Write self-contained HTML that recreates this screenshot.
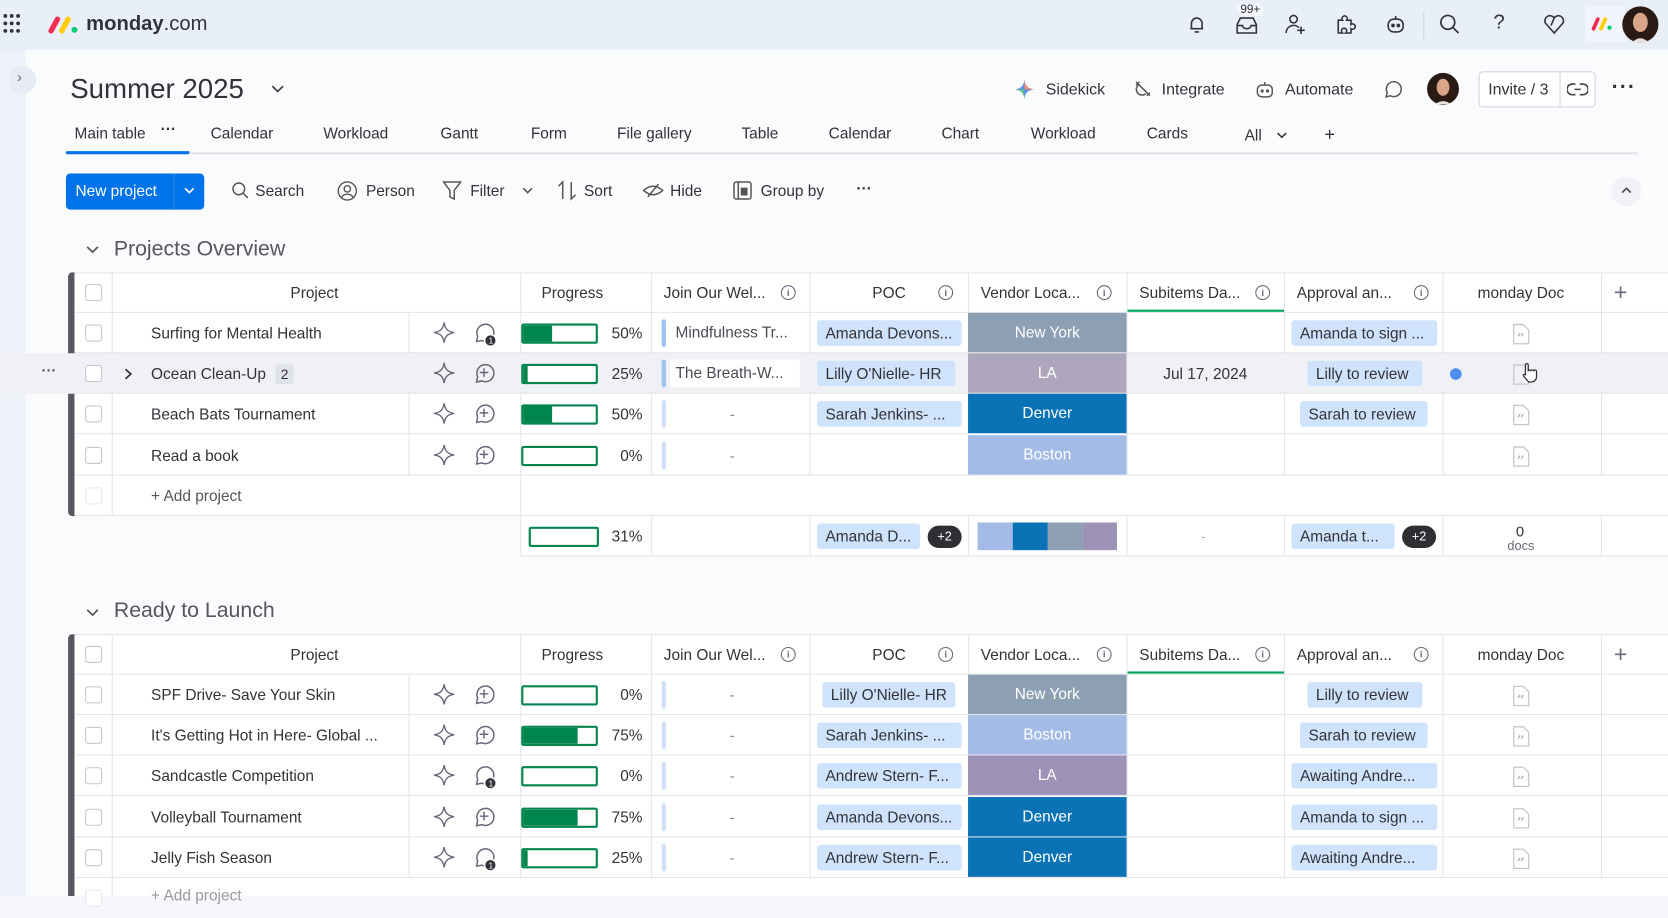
<!DOCTYPE html>
<html><head><meta charset="utf-8">
<style>
*{box-sizing:border-box;margin:0;padding:0}
html,body{width:1668px;height:896px;overflow:hidden;background:#f6f7fb;font-family:"Liberation Sans",sans-serif;color:#323338}
#w{position:absolute;left:0;top:0;width:1568px;height:842px;transform:scale(1.06378,1.06413);transform-origin:0 0;background:#fafbfc}
.a{position:absolute}
.top{left:0;top:0;width:1568px;height:47px;background:#e9eff9}
.side{left:0;top:47px;width:24px;height:795px;background:#edf1f8}
.t{position:absolute;white-space:nowrap}
.tab{top:118px;font-size:14.5px;color:#323338}
.tb{top:172px;font-size:14.5px;color:#323338}
.row{position:absolute;left:0;width:1568px;height:38px}
.row .ln{position:absolute;left:70px;right:0;bottom:0;height:1px;background:#e3e5ea}
.cb{position:absolute;left:80px;top:11px;width:16px;height:16px;border:1px solid #c5c7d0;border-radius:3px;background:#fff}
.nm{position:absolute;left:142px;top:12px;font-size:14.5px;white-space:nowrap}
.ic1{position:absolute;left:407px;top:8px}
.ic2{position:absolute;left:443px;top:7px}
.pb{position:absolute;left:490px;top:10px;width:72px;height:19px;border:2px solid #00854d;border-radius:2px;background:#fff;overflow:hidden}
.pb i{position:absolute;left:0;top:0;bottom:0;background:#00854d}
.pc{position:absolute;left:560px;width:44px;top:12px;text-align:right;font-size:14.5px}
.jb{position:absolute;left:622px;top:6px;width:4px;height:26px;border-radius:2px;background:#cfe0f7}
.jt{position:absolute;left:630px;top:6px;width:122px;height:26px;background:#fff;font-size:14.5px;padding:5px 0 0 5px;color:#4a4b55;white-space:nowrap}
.dash{position:absolute;left:686px;top:11px;font-size:14px;color:#888}
.pill{position:absolute;top:7px;height:24px;background:#cfe3fc;border-radius:3px;font-size:14.5px;padding:5px 0 0 8px;white-space:nowrap;color:#323338}
.vd{position:absolute;left:910px;top:0;width:149px;height:37px;color:#fff;font-size:14.5px;text-align:center;padding-top:11px}
.dt{position:absolute;left:1059px;width:148px;top:12px;text-align:center;font-size:14.5px}
.doc{position:absolute;left:1422px;top:10px}
.vl{position:absolute;width:1px;background:#e3e5ea}
.hd{position:absolute;font-size:14.5px;top:12px;white-space:nowrap}
.inf{position:absolute;top:12px;width:14px;height:14px;border:1.3px solid #676879;border-radius:50%;font-size:9px;text-align:center;line-height:12px;color:#676879;font-weight:bold}
.grp{font-size:20px;color:#555662}
</style></head><body>
<div id="w">
<div class="a top"></div>
<div class="a side"></div>
<div class="a" style="left:3px;top:13px;width:16px;height:18px">
<svg width="16" height="18"><g fill="#323338"><circle cx="2" cy="2" r="1.8"/><circle cx="8" cy="2" r="1.8"/><circle cx="14" cy="2" r="1.8"/><circle cx="2" cy="9" r="1.8"/><circle cx="8" cy="9" r="1.8"/><circle cx="14" cy="9" r="1.8"/><circle cx="2" cy="16" r="1.8"/><circle cx="8" cy="16" r="1.8"/><circle cx="14" cy="16" r="1.8"/></g></svg></div>
<svg class="a" style="left:45px;top:14px" width="30" height="18"><path d="M3 15 L9 4" stroke="#f62b54" stroke-width="5" stroke-linecap="round"/><path d="M13 15 L19 4" stroke="#ffcc00" stroke-width="5" stroke-linecap="round"/><circle cx="25" cy="14" r="2.8" fill="#00ca72"/></svg>
<div class="t" style="left:81px;top:12px;font-size:19px;color:#323338"><b>monday</b>.com</div>
<svg class="a" style="left:1115px;top:13px" width="20" height="20" fill="none" stroke="#323338" stroke-width="1.5"><path d="M5 14 V9 a5 5 0 0 1 10 0 V14 H4 H16 M8 17 h4"/></svg>
<svg class="a" style="left:1161px;top:14px" width="22" height="20" fill="none" stroke="#323338" stroke-width="1.5"><path d="M2 9 L5 3 H17 L20 9 V17 H2 Z M2 10 H7 a4 3 0 0 0 8 0 H20"/></svg>
<div class="t" style="left:1163px;top:3px;font-size:11px;background:#f4f6fb;border-radius:6px;padding:0 3px">99+</div>
<svg class="a" style="left:1207px;top:12px" width="22" height="22" fill="none" stroke="#323338" stroke-width="1.5"><circle cx="9" cy="6" r="3.5"/><path d="M2 19 a7 7 0 0 1 12-5 M16 13 v7 M12.5 16.5 h7"/></svg>
<svg class="a" style="left:1254px;top:12px" width="22" height="22" fill="none" stroke="#323338" stroke-width="1.5"><path d="M4 7 H8 a2.5 2.5 0 1 1 4 0 H16 V11 a2.5 2.5 0 1 1 0 4 V19 H11 a2.5 2.5 0 1 0-3 0 H4 Z"/></svg>
<svg class="a" style="left:1301px;top:12px" width="22" height="22" fill="none" stroke="#323338" stroke-width="1.5"><rect x="4" y="6" width="14" height="12" rx="5"/><path d="M11 3 v3"/><circle cx="8.5" cy="12" r="1" fill="#323338"/><circle cx="13.5" cy="12" r="1" fill="#323338"/></svg>
<div class="a" style="left:1338px;top:12px;width:1px;height:24px;background:#cdd3df"></div>
<svg class="a" style="left:1352px;top:12px" width="22" height="22" fill="none" stroke="#323338" stroke-width="1.6"><circle cx="9" cy="9" r="6.5"/><path d="M14 14 L19 19"/></svg>
<div class="t" style="left:1404px;top:11px;font-size:19px;color:#323338">?</div>
<svg class="a" style="left:1450px;top:12px" width="22" height="22" fill="none" stroke="#323338" stroke-width="1.5"><path d="M11 19 L3 10 a4.5 4.5 0 0 1 8-5 a4.5 4.5 0 0 1 8 5 Z M11 5 L8 12"/></svg>
<div class="a" style="left:1490px;top:6px;width:38px;height:34px;background:#f1f4fa"></div>
<svg class="a" style="left:1495px;top:14px" width="24" height="16"><path d="M3 13 L7 4" stroke="#f62b54" stroke-width="3.5" stroke-linecap="round"/><path d="M10 13 L14 4" stroke="#ffcc00" stroke-width="3.5" stroke-linecap="round"/><circle cx="18" cy="12" r="2" fill="#00ca72"/></svg>
<svg class="a" style="left:1524px;top:4px" width="36" height="38"><circle cx="18" cy="19" r="17" fill="#2a1a14"/><ellipse cx="18" cy="17" rx="7" ry="9" fill="#d9a68a"/><path d="M10 36 Q18 28 26 36" fill="#e8e0dc"/></svg>

<div class="a" style="left:8px;top:62px;width:26px;height:26px;border-radius:50%;background:#e6ebf4"></div>
<div class="t" style="left:16px;top:64px;font-size:14px;color:#676879">›</div>
<div class="t" style="left:66px;top:68px;font-size:26px;color:#323338">Summer 2025</div>
<svg class="a" style="left:254px;top:79px" width="14" height="10" fill="none" stroke="#323338" stroke-width="1.5"><path d="M2 2 L7 7 L12 2"/></svg>
<svg class="a" style="left:953px;top:74px" width="20" height="20"><path d="M10 1 C10.8 7 13 9.2 19 10 C13 10.8 10.8 13 10 19 C9.2 13 7 10.8 1 10 C7 9.2 9.2 7 10 1Z" fill="#5b8def"/><path d="M10 1 C10.8 7 13 9.2 19 10 L10 10Z" fill="#f98b6a"/><path d="M10 19 C9.2 13 7 10.8 1 10 L10 10Z" fill="#5cc48a"/></svg>
<div class="t" style="left:983px;top:76px;font-size:15px">Sidekick</div>
<svg class="a" style="left:1064px;top:74px" width="20" height="20" fill="none" stroke="#555" stroke-width="1.4"><path d="M4 3 L17 16 M6 6 a5 5 0 0 0 7 8 M7 3 L4 6 M14 16 L17 13"/></svg>
<div class="t" style="left:1092px;top:76px;font-size:15px">Integrate</div>
<svg class="a" style="left:1179px;top:75px" width="20" height="20" fill="none" stroke="#555" stroke-width="1.4"><rect x="3" y="5" width="14" height="11" rx="4"/><path d="M10 2 v3"/><circle cx="7.5" cy="10.5" r="0.8" fill="#555"/><circle cx="12.5" cy="10.5" r="0.8" fill="#555"/></svg>
<div class="t" style="left:1208px;top:76px;font-size:15px">Automate</div>
<svg class="a" style="left:1298px;top:73px" width="22" height="22" fill="none" stroke="#555" stroke-width="1.4"><path d="M5 18 L6 14 a7 7 0 1 1 3 3 Z"/></svg>
<svg class="a" style="left:1341px;top:68px" width="31" height="31"><circle cx="15.5" cy="15.5" r="15" fill="#2a1a14"/><ellipse cx="15.5" cy="14" rx="6" ry="8" fill="#d9a68a"/><path d="M8 30 Q15.5 24 23 30" fill="#e8e0dc"/></svg>
<div class="a" style="left:1390px;top:67px;width:110px;height:34px;border:1px solid #d0d4e4;border-radius:4px;background:#fff"></div>
<div class="a" style="left:1466px;top:67px;width:1px;height:34px;background:#d0d4e4"></div>
<div class="t" style="left:1399px;top:76px;font-size:15px">Invite / 3</div>
<svg class="a" style="left:1473px;top:75px" width="20" height="18" fill="none" stroke="#444" stroke-width="1.5"><path d="M8 4 H5 a5 5 0 0 0 0 10 H8 M12 4 H15 a5 5 0 0 1 0 10 H12 M7 9 H13"/></svg>
<div class="t" style="left:1515px;top:71px;font-size:20px;font-weight:bold;letter-spacing:1px">···</div>

<div class="t tab" style="left:70px">Main table</div>
<div class="t tab" style="left:151px;top:114px;font-weight:bold">···</div>
<div class="t tab" style="left:198px">Calendar</div>
<div class="t tab" style="left:304px">Workload</div>
<div class="t tab" style="left:414px">Gantt</div>
<div class="t tab" style="left:499px">Form</div>
<div class="t tab" style="left:580px">File gallery</div>
<div class="t tab" style="left:697px">Table</div>
<div class="t tab" style="left:779px">Calendar</div>
<div class="t tab" style="left:885px">Chart</div>
<div class="t tab" style="left:969px">Workload</div>
<div class="t tab" style="left:1078px">Cards</div>
<div class="t tab" style="left:1170px;top:120px">All</div>
<svg class="a" style="left:1199px;top:123px" width="12" height="10" fill="none" stroke="#323338" stroke-width="1.5"><path d="M2 2 L6 6 L10 2"/></svg>
<div class="t tab" style="left:1245px;top:117px;font-size:17px">+</div>
<div class="a" style="left:62px;top:143px;width:1478px;height:2px;background:#e3e5ea"></div>
<div class="a" style="left:62px;top:142px;width:116px;height:3px;background:#0073ea;border-radius:1px"></div>

<div class="a" style="left:62px;top:163px;width:130px;height:34px;background:#0073ea;border-radius:4px"></div>
<div class="t tb" style="left:71px;color:#fff">New project</div>
<div class="a" style="left:163px;top:163px;width:1px;height:34px;background:#2e8af0"></div>
<svg class="a" style="left:172px;top:175px" width="12" height="10" fill="none" stroke="#fff" stroke-width="1.6"><path d="M2 2 L6 6 L10 2"/></svg>
<svg class="a" style="left:217px;top:170px" width="18" height="18" fill="none" stroke="#555" stroke-width="1.4"><circle cx="7.5" cy="7.5" r="5.5"/><path d="M11.5 11.5 L16 16"/></svg>
<div class="t tb" style="left:240px">Search</div>
<svg class="a" style="left:317px;top:170px" width="19" height="19" fill="none" stroke="#555" stroke-width="1.3"><circle cx="9.5" cy="9.5" r="8.5"/><circle cx="9.5" cy="7.5" r="3"/><path d="M4 15.5 a6 5 0 0 1 11 0"/></svg>
<div class="t tb" style="left:344px">Person</div>
<svg class="a" style="left:416px;top:170px" width="18" height="19" fill="none" stroke="#555" stroke-width="1.4"><path d="M1 1 H17 L11 9 V17 L7 15 V9 Z"/></svg>
<div class="t tb" style="left:442px">Filter</div>
<svg class="a" style="left:490px;top:175px" width="12" height="10" fill="none" stroke="#555" stroke-width="1.5"><path d="M2 2 L6 6 L10 2"/></svg>
<svg class="a" style="left:524px;top:169px" width="18" height="20" fill="none" stroke="#555" stroke-width="1.4"><path d="M5 18 V2 L1 6 M13 2 V18 L17 14"/></svg>
<div class="t tb" style="left:549px">Sort</div>
<svg class="a" style="left:604px;top:170px" width="20" height="18" fill="none" stroke="#555" stroke-width="1.4"><path d="M1 9 Q10 1 19 9 Q10 17 1 9 Z M5 15 L15 3"/></svg>
<div class="t tb" style="left:630px">Hide</div>
<svg class="a" style="left:689px;top:170px" width="18" height="18" fill="none" stroke="#555" stroke-width="1.4"><rect x="1" y="1" width="16" height="16" rx="2"/><path d="M5 1 V17"/><rect x="8" y="7" width="5" height="6" fill="#555"/></svg>
<div class="t tb" style="left:715px">Group by</div>
<div class="t tb" style="left:805px;top:170px;font-weight:bold">···</div>
<div class="a" style="left:1515px;top:166px;width:28px;height:28px;border-radius:50%;background:#f0f2f6"></div>
<svg class="a" style="left:1523px;top:175px" width="12" height="8" fill="none" stroke="#444" stroke-width="1.5"><path d="M2 6 L6 2 L10 6"/></svg>

<svg class="a" style="left:80px;top:230px" width="14" height="10" fill="none" stroke="#555" stroke-width="1.6"><path d="M2 2 L7 7 L12 2"/></svg>
<div class="t grp" style="left:107px;top:223px">Projects Overview</div>
<div class="a" style="left:64px;top:256px;width:1504px;height:229px;background:#fff;border-top:1px solid #e3e5ea"></div>
<div class="a" style="left:489px;top:485px;width:1079px;height:38px;background:#fff;border-bottom:1px solid #e3e5ea"></div>
<div class="a" style="left:64px;top:256px;width:6px;height:229px;background:#57585f;border-radius:4px 0 0 4px"></div>
<div class="row" style="top:256px"><div class="ln"></div>
<div class="cb"></div>
<div class="hd" style="left:273px">Project</div>
<div class="hd" style="left:509px">Progress</div>
<div class="hd" style="left:624px">Join Our Wel...</div><div class="inf" style="left:734px">i</div>
<div class="hd" style="left:820px">POC</div><div class="inf" style="left:882px">i</div>
<div class="hd" style="left:922px">Vendor Loca...</div><div class="inf" style="left:1031px">i</div>
<div class="hd" style="left:1071px">Subitems Da...</div><div class="inf" style="left:1180px">i</div>
<div class="a" style="left:1059px;top:35px;width:148px;height:2px;background:#00a359"></div>
<div class="hd" style="left:1219px">Approval an...</div><div class="inf" style="left:1329px">i</div>
<div class="hd" style="left:1389px">monday Doc</div>
<div class="t" style="left:1517px;top:6px;font-size:22px;color:#676879;font-weight:300">+</div>
</div>
<div class="vl" style="left:105px;top:256px;height:229px"></div>
<div class="vl" style="left:384px;top:294px;height:153px"></div>
<div class="vl" style="left:489px;top:256px;height:267px"></div>
<div class="vl" style="left:612px;top:256px;height:191px"></div>
<div class="vl" style="left:612px;top:485px;height:38px"></div>
<div class="vl" style="left:761px;top:256px;height:191px"></div>
<div class="vl" style="left:761px;top:485px;height:38px"></div>
<div class="vl" style="left:910px;top:256px;height:191px"></div>
<div class="vl" style="left:910px;top:485px;height:38px"></div>
<div class="vl" style="left:1059px;top:256px;height:191px"></div>
<div class="vl" style="left:1059px;top:485px;height:38px"></div>
<div class="vl" style="left:1207px;top:256px;height:191px"></div>
<div class="vl" style="left:1207px;top:485px;height:38px"></div>
<div class="vl" style="left:1356px;top:256px;height:191px"></div>
<div class="vl" style="left:1356px;top:485px;height:38px"></div>
<div class="vl" style="left:1505px;top:256px;height:191px"></div>
<div class="vl" style="left:1505px;top:485px;height:38px"></div>

<div class="row" style="top:294px"><div class="ln"></div><div class="cb"></div>
<div class="nm">Surfing for Mental Health</div>
<svg class="ic1" width="21" height="21" fill="none" stroke="#676879" stroke-width="1.3"><path d="M10.5 1 C11.3 7 14 9.7 20 10.5 C14 11.3 11.3 14 10.5 20 C9.7 14 7 11.3 1 10.5 C7 9.7 9.7 7 10.5 1Z"/></svg>
<svg class="ic2" width="26" height="26" fill="none" stroke="#676879" stroke-width="1.4"><path d="M5 20 L6 15 a8 8 0 1 1 4 4 Z"/><circle cx="18" cy="19" r="5.5" fill="#323338" stroke="#fff"/><text x="16.2" y="22" font-size="8" fill="#fff" stroke="none" font-family="Liberation Sans">1</text></svg>
<div class="pb"><i style="width:27px"></i></div><div class="pc">50%</div>
<div class="jb" style="background:#9ec3f0"></div><div class="jt">Mindfulness Tr...</div>
<div class="pill" style="left:768px;width:136px">Amanda Devons...</div>
<div class="vd" style="background:#8da0b3">New York</div>
<div class="pill" style="left:1214px;width:137px">Amanda to sign ...</div>
<svg class="doc" width="16" height="20" fill="none" stroke="#c5c7d0" stroke-width="1.2"><path d="M1 1 H10 L15 6 V19 H1 Z"/><path d="M5 12 L7 9 M8 12 L10 9" stroke="#aaa"/></svg>
</div>
<div class="row" style="top:332px;background:#f0f1f5"><div class="ln"></div><div class="cb"></div>
<div class="t" style="left:39px;top:8px;font-size:14px;font-weight:bold;color:#555">···</div>
<svg class="a" style="left:116px;top:13px" width="10" height="13" fill="none" stroke="#323338" stroke-width="1.6"><path d="M2 2 L7 6.5 L2 11"/></svg>
<div class="nm">Ocean Clean-Up</div>
<div class="a" style="left:259px;top:10px;width:17px;height:19px;background:#e1e3ea;border-radius:3px;font-size:13px;text-align:center;padding-top:2px">2</div>
<svg class="ic1" width="21" height="21" fill="none" stroke="#676879" stroke-width="1.3"><path d="M10.5 1 C11.3 7 14 9.7 20 10.5 C14 11.3 11.3 14 10.5 20 C9.7 14 7 11.3 1 10.5 C7 9.7 9.7 7 10.5 1Z"/></svg>
<svg class="ic2" width="26" height="26" fill="none" stroke="#676879" stroke-width="1.4"><path d="M5 20 L6 15 a8 8 0 1 1 4 4 Z M12 7 V15 M8 11 H16"/></svg>
<div class="pb"><i style="width:4px"></i></div><div class="pc">25%</div>
<div class="jb" style="background:#9ec3f0"></div><div class="jt">The Breath-W...</div>
<div class="pill" style="left:768px;width:130px">Lilly O'Nielle- HR</div>
<div class="vd" style="background:#aea6bc">LA</div>
<div class="dt">Jul 17, 2024</div>
<div class="pill" style="left:1229px;width:108px">Lilly to review</div>
<div class="a" style="left:1363px;top:14px;width:11px;height:11px;border-radius:50%;background:#4f8df0"></div>
<svg class="doc" width="16" height="20" fill="none" stroke="#c5c7d0" stroke-width="1.2"><path d="M1 1 H10 L15 6 V19 H1 Z"/></svg>
<svg class="a" style="left:1429px;top:8px" width="18" height="20" fill="#fff" stroke="#323338" stroke-width="1.2"><path d="M5 12 V3 a1.3 1.3 0 0 1 2.6 0 V9 a1.3 1.3 0 0 1 2.6 0 a1.3 1.3 0 0 1 2.6 0 a1.3 1.3 0 0 1 2.6 0 V14 a5 5 0 0 1-5 5 H8 L3 13 a1.3 1.3 0 0 1 2-1Z"/></svg>
</div>
<div class="row" style="top:370px"><div class="ln"></div><div class="cb"></div>
<div class="nm">Beach Bats Tournament</div>
<svg class="ic1" width="21" height="21" fill="none" stroke="#676879" stroke-width="1.3"><path d="M10.5 1 C11.3 7 14 9.7 20 10.5 C14 11.3 11.3 14 10.5 20 C9.7 14 7 11.3 1 10.5 C7 9.7 9.7 7 10.5 1Z"/></svg>
<svg class="ic2" width="26" height="26" fill="none" stroke="#676879" stroke-width="1.4"><path d="M5 20 L6 15 a8 8 0 1 1 4 4 Z M12 7 V15 M8 11 H16"/></svg>
<div class="pb"><i style="width:27px"></i></div><div class="pc">50%</div>
<div class="jb"></div><div class="dash">-</div>
<div class="pill" style="left:768px;width:136px">Sarah Jenkins- ...</div>
<div class="vd" style="background:#0a73b5">Denver</div>
<div class="pill" style="left:1222px;width:120px">Sarah to review</div>
<svg class="doc" width="16" height="20" fill="none" stroke="#c5c7d0" stroke-width="1.2"><path d="M1 1 H10 L15 6 V19 H1 Z"/><path d="M5 12 L7 9 M8 12 L10 9" stroke="#aaa"/></svg>
</div>
<div class="row" style="top:409px"><div class="ln"></div><div class="cb"></div>
<div class="nm">Read a book</div>
<svg class="ic1" width="21" height="21" fill="none" stroke="#676879" stroke-width="1.3"><path d="M10.5 1 C11.3 7 14 9.7 20 10.5 C14 11.3 11.3 14 10.5 20 C9.7 14 7 11.3 1 10.5 C7 9.7 9.7 7 10.5 1Z"/></svg>
<svg class="ic2" width="26" height="26" fill="none" stroke="#676879" stroke-width="1.4"><path d="M5 20 L6 15 a8 8 0 1 1 4 4 Z M12 7 V15 M8 11 H16"/></svg>
<div class="pb"></div><div class="pc">0%</div>
<div class="jb"></div><div class="dash">-</div>
<div class="vd" style="background:#a4bbe7">Boston</div>
<svg class="doc" width="16" height="20" fill="none" stroke="#c5c7d0" stroke-width="1.2"><path d="M1 1 H10 L15 6 V19 H1 Z"/><path d="M5 12 L7 9 M8 12 L10 9" stroke="#aaa"/></svg>
</div>
<div class="row" style="top:447px"><div class="ln"></div><div class="cb" style="border-color:#e6e7ec"></div>
<div class="nm" style="color:#555">+ Add project</div></div>
<div class="row" style="top:485px">
<div class="pb" style="left:497px;width:66px"></div><div class="pc">31%</div>
<div class="pill" style="left:768px;width:97px">Amanda D...</div>
<div class="a" style="left:872px;top:9px;width:32px;height:21px;border-radius:11px;background:#2f2f33;color:#fff;font-size:12px;text-align:center;padding-top:3px">+2</div>
<div class="a" style="left:919px;top:6px;width:33px;height:26px;background:#a4bbe7"></div>
<div class="a" style="left:952px;top:6px;width:33px;height:26px;background:#0a73b5"></div>
<div class="a" style="left:985px;top:6px;width:33px;height:26px;background:#8da0b3"></div>
<div class="a" style="left:1018px;top:6px;width:32px;height:26px;background:#9d93b6"></div>
<div class="dash" style="left:1129px;color:#bbb">-</div>
<div class="pill" style="left:1214px;width:97px">Amanda t...</div>
<div class="a" style="left:1318px;top:9px;width:32px;height:21px;border-radius:11px;background:#2f2f33;color:#fff;font-size:12px;text-align:center;padding-top:3px">+2</div>
<div class="t" style="left:1425px;top:6px;font-size:14px">0</div>
<div class="t" style="left:1417px;top:21px;font-size:12px;color:#676879">docs</div>
</div>

<svg class="a" style="left:80px;top:571px" width="14" height="10" fill="none" stroke="#555" stroke-width="1.6"><path d="M2 2 L7 7 L12 2"/></svg>
<div class="t grp" style="left:107px;top:563px">Ready to Launch</div>
<div class="a" style="left:64px;top:596px;width:1504px;height:246px;background:#fff;border-top:1px solid #e3e5ea"></div>
<div class="a" style="left:64px;top:596px;width:6px;height:246px;background:#57585f;border-radius:4px 0 0 0"></div>
<div class="row" style="top:596px"><div class="ln"></div>
<div class="cb"></div>
<div class="hd" style="left:273px">Project</div>
<div class="hd" style="left:509px">Progress</div>
<div class="hd" style="left:624px">Join Our Wel...</div><div class="inf" style="left:734px">i</div>
<div class="hd" style="left:820px">POC</div><div class="inf" style="left:882px">i</div>
<div class="hd" style="left:922px">Vendor Loca...</div><div class="inf" style="left:1031px">i</div>
<div class="hd" style="left:1071px">Subitems Da...</div><div class="inf" style="left:1180px">i</div>
<div class="a" style="left:1059px;top:35px;width:148px;height:2px;background:#00a359"></div>
<div class="hd" style="left:1219px">Approval an...</div><div class="inf" style="left:1329px">i</div>
<div class="hd" style="left:1389px">monday Doc</div>
<div class="t" style="left:1517px;top:6px;font-size:22px;color:#676879">+</div>
</div>
<div class="vl" style="left:105px;top:596px;height:246px"></div>
<div class="vl" style="left:384px;top:634px;height:191px"></div>
<div class="vl" style="left:489px;top:596px;height:229px"></div>
<div class="vl" style="left:612px;top:596px;height:229px"></div>
<div class="vl" style="left:761px;top:596px;height:229px"></div>
<div class="vl" style="left:910px;top:596px;height:229px"></div>
<div class="vl" style="left:1059px;top:596px;height:229px"></div>
<div class="vl" style="left:1207px;top:596px;height:229px"></div>
<div class="vl" style="left:1356px;top:596px;height:229px"></div>
<div class="vl" style="left:1505px;top:596px;height:229px"></div>

<div class="row" style="top:634px"><div class="ln"></div><div class="cb"></div>
<div class="nm">SPF Drive- Save Your Skin</div>
<svg class="ic1" width="21" height="21" fill="none" stroke="#676879" stroke-width="1.3"><path d="M10.5 1 C11.3 7 14 9.7 20 10.5 C14 11.3 11.3 14 10.5 20 C9.7 14 7 11.3 1 10.5 C7 9.7 9.7 7 10.5 1Z"/></svg>
<svg class="ic2" width="26" height="26" fill="none" stroke="#676879" stroke-width="1.4"><path d="M5 20 L6 15 a8 8 0 1 1 4 4 Z M12 7 V15 M8 11 H16"/></svg>
<div class="pb"></div><div class="pc">0%</div>
<div class="jb"></div><div class="dash">-</div>
<div class="pill" style="left:773px;width:125px">Lilly O'Nielle- HR</div>
<div class="vd" style="background:#8da0b3">New York</div>
<div class="pill" style="left:1229px;width:108px">Lilly to review</div>
<svg class="doc" width="16" height="20" fill="none" stroke="#c5c7d0" stroke-width="1.2"><path d="M1 1 H10 L15 6 V19 H1 Z"/><path d="M5 12 L7 9 M8 12 L10 9" stroke="#aaa"/></svg>
</div>
<div class="row" style="top:672px"><div class="ln"></div><div class="cb"></div>
<div class="nm">It's Getting Hot in Here- Global ...</div>
<svg class="ic1" width="21" height="21" fill="none" stroke="#676879" stroke-width="1.3"><path d="M10.5 1 C11.3 7 14 9.7 20 10.5 C14 11.3 11.3 14 10.5 20 C9.7 14 7 11.3 1 10.5 C7 9.7 9.7 7 10.5 1Z"/></svg>
<svg class="ic2" width="26" height="26" fill="none" stroke="#676879" stroke-width="1.4"><path d="M5 20 L6 15 a8 8 0 1 1 4 4 Z M12 7 V15 M8 11 H16"/></svg>
<div class="pb"><i style="width:51px"></i></div><div class="pc">75%</div>
<div class="jb"></div><div class="dash">-</div>
<div class="pill" style="left:768px;width:136px">Sarah Jenkins- ...</div>
<div class="vd" style="background:#a4bbe7">Boston</div>
<div class="pill" style="left:1222px;width:120px">Sarah to review</div>
<svg class="doc" width="16" height="20" fill="none" stroke="#c5c7d0" stroke-width="1.2"><path d="M1 1 H10 L15 6 V19 H1 Z"/><path d="M5 12 L7 9 M8 12 L10 9" stroke="#aaa"/></svg>
</div>
<div class="row" style="top:710px"><div class="ln"></div><div class="cb"></div>
<div class="nm">Sandcastle Competition</div>
<svg class="ic1" width="21" height="21" fill="none" stroke="#676879" stroke-width="1.3"><path d="M10.5 1 C11.3 7 14 9.7 20 10.5 C14 11.3 11.3 14 10.5 20 C9.7 14 7 11.3 1 10.5 C7 9.7 9.7 7 10.5 1Z"/></svg>
<svg class="ic2" width="26" height="26" fill="none" stroke="#676879" stroke-width="1.4"><path d="M5 20 L6 15 a8 8 0 1 1 4 4 Z"/><circle cx="18" cy="19" r="5.5" fill="#323338" stroke="#fff"/><text x="16.2" y="22" font-size="8" fill="#fff" stroke="none" font-family="Liberation Sans">1</text></svg>
<div class="pb"></div><div class="pc">0%</div>
<div class="jb"></div><div class="dash">-</div>
<div class="pill" style="left:768px;width:136px">Andrew Stern- F...</div>
<div class="vd" style="background:#9d93b6">LA</div>
<div class="pill" style="left:1214px;width:137px">Awaiting Andre...</div>
<svg class="doc" width="16" height="20" fill="none" stroke="#c5c7d0" stroke-width="1.2"><path d="M1 1 H10 L15 6 V19 H1 Z"/><path d="M5 12 L7 9 M8 12 L10 9" stroke="#aaa"/></svg>
</div>
<div class="row" style="top:749px"><div class="ln"></div><div class="cb"></div>
<div class="nm">Volleyball Tournament</div>
<svg class="ic1" width="21" height="21" fill="none" stroke="#676879" stroke-width="1.3"><path d="M10.5 1 C11.3 7 14 9.7 20 10.5 C14 11.3 11.3 14 10.5 20 C9.7 14 7 11.3 1 10.5 C7 9.7 9.7 7 10.5 1Z"/></svg>
<svg class="ic2" width="26" height="26" fill="none" stroke="#676879" stroke-width="1.4"><path d="M5 20 L6 15 a8 8 0 1 1 4 4 Z M12 7 V15 M8 11 H16"/></svg>
<div class="pb"><i style="width:51px"></i></div><div class="pc">75%</div>
<div class="jb"></div><div class="dash">-</div>
<div class="pill" style="left:768px;width:136px">Amanda Devons...</div>
<div class="vd" style="background:#0a73b5">Denver</div>
<div class="pill" style="left:1214px;width:137px">Amanda to sign ...</div>
<svg class="doc" width="16" height="20" fill="none" stroke="#c5c7d0" stroke-width="1.2"><path d="M1 1 H10 L15 6 V19 H1 Z"/><path d="M5 12 L7 9 M8 12 L10 9" stroke="#aaa"/></svg>
</div>
<div class="row" style="top:787px"><div class="ln"></div><div class="cb"></div>
<div class="nm">Jelly Fish Season</div>
<svg class="ic1" width="21" height="21" fill="none" stroke="#676879" stroke-width="1.3"><path d="M10.5 1 C11.3 7 14 9.7 20 10.5 C14 11.3 11.3 14 10.5 20 C9.7 14 7 11.3 1 10.5 C7 9.7 9.7 7 10.5 1Z"/></svg>
<svg class="ic2" width="26" height="26" fill="none" stroke="#676879" stroke-width="1.4"><path d="M5 20 L6 15 a8 8 0 1 1 4 4 Z"/><circle cx="18" cy="19" r="5.5" fill="#323338" stroke="#fff"/><text x="16.2" y="22" font-size="8" fill="#fff" stroke="none" font-family="Liberation Sans">1</text></svg>
<div class="pb"><i style="width:4px"></i></div><div class="pc">25%</div>
<div class="jb"></div><div class="dash">-</div>
<div class="pill" style="left:768px;width:136px">Andrew Stern- F...</div>
<div class="vd" style="background:#0a73b5">Denver</div>
<div class="pill" style="left:1214px;width:137px">Awaiting Andre...</div>
<svg class="doc" width="16" height="20" fill="none" stroke="#c5c7d0" stroke-width="1.2"><path d="M1 1 H10 L15 6 V19 H1 Z"/><path d="M5 12 L7 9 M8 12 L10 9" stroke="#aaa"/></svg>
</div>
<div class="row" style="top:825px"><div class="cb" style="border-color:#e6e7ec"></div>
<div class="nm" style="color:#999;top:9px">+ Add project</div></div>
</div>
</body></html>
